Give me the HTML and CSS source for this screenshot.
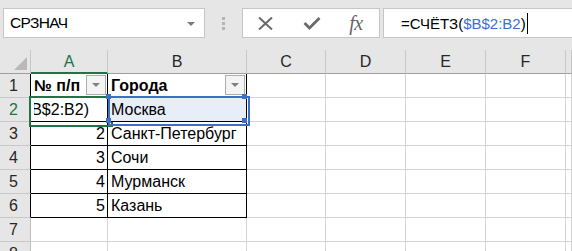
FILE: index.html
```html
<!DOCTYPE html>
<html lang="ru">
<head>
<meta charset="utf-8">
<title>Excel</title>
<link rel="stylesheet" href="styles.css">
</head>
<body>
<div class="toolbar">
  <div class="namebox"><span class="name">СРЗНАЧ</span><span class="nb-arrow"></span></div>
  <div class="grip"><i></i><i></i><i></i></div>
  <div class="fbtns">
    <span class="slot s1"><svg width="15" height="13" viewBox="0 0 15 13"><path d="M1 0.5 L14 12.5 M14 0.5 L1 12.5" stroke="#6a6a6a" stroke-width="2" fill="none"/></svg></span>
    <span class="slot s2"><svg width="18" height="13" viewBox="0 0 18 13"><path d="M1.5 6 L6.5 11 L16.5 1" stroke="#6a6a6a" stroke-width="2.8" fill="none"/></svg></span>
    <span class="slot s3"><span class="fx">fx</span></span>
  </div>
  <div class="formula"><span>=СЧЁТЗ(</span><span class="ref">$B$2:B2</span><span>)</span><span class="caret"></span></div>
</div>
<div class="sheet">
  <div class="row hdr">
    <div class="cell corner"><span class="tri"></span></div>
    <div class="cell ch active">A</div>
    <div class="cell ch">B</div>
    <div class="cell ch">C</div>
    <div class="cell ch">D</div>
    <div class="cell ch">E</div>
    <div class="cell ch">F</div>
    <div class="cell ch last"></div>
  </div>
  <div class="row">
    <div class="cell rh tb">1</div>
    <div class="cell t th"><span>№ п/п</span><span class="dd"></span></div>
    <div class="cell t th"><span>Города</span><span class="dd"></span></div>
    <div class="cell"></div><div class="cell"></div><div class="cell"></div><div class="cell"></div><div class="cell"></div>
  </div>
  <div class="row">
    <div class="cell rh tb active">2</div>
    <div class="cell t num sel"><span class="clip"><span class="edit">=СЧЁТЗ($B$2:B2)</span></span></div>
    <div class="cell t txt rng"><span>Москва</span></div>
    <div class="cell"></div><div class="cell"></div><div class="cell"></div><div class="cell"></div><div class="cell"></div>
  </div>
  <div class="row">
    <div class="cell rh tb">3</div>
    <div class="cell t num">2</div>
    <div class="cell t txt">Санкт-Петербург</div>
    <div class="cell"></div><div class="cell"></div><div class="cell"></div><div class="cell"></div><div class="cell"></div>
  </div>
  <div class="row">
    <div class="cell rh tb">4</div>
    <div class="cell t num">3</div>
    <div class="cell t txt">Сочи</div>
    <div class="cell"></div><div class="cell"></div><div class="cell"></div><div class="cell"></div><div class="cell"></div>
  </div>
  <div class="row">
    <div class="cell rh tb">5</div>
    <div class="cell t num">4</div>
    <div class="cell t txt">Мурманск</div>
    <div class="cell"></div><div class="cell"></div><div class="cell"></div><div class="cell"></div><div class="cell"></div>
  </div>
  <div class="row">
    <div class="cell rh tb">6</div>
    <div class="cell t num">5</div>
    <div class="cell t txt">Казань</div>
    <div class="cell"></div><div class="cell"></div><div class="cell"></div><div class="cell"></div><div class="cell"></div>
  </div>
  <div class="row">
    <div class="cell rh">7</div>
    <div class="cell"></div><div class="cell"></div><div class="cell"></div><div class="cell"></div><div class="cell"></div><div class="cell"></div><div class="cell"></div>
  </div>
  <div class="row">
    <div class="cell rh">8</div>
    <div class="cell"></div><div class="cell"></div><div class="cell"></div><div class="cell"></div><div class="cell"></div><div class="cell"></div><div class="cell"></div>
  </div>
</div>
</body>
</html>
```
FILE: styles.css
```css
* { box-sizing: border-box; }
html, body { margin: 0; padding: 0; }
body {
  width: 572px;
  height: 251px;
  overflow: hidden;
  background: #fff;
  font-family: "Liberation Sans", Arial, sans-serif;
  color: #000;
}

/* ---------- formula bar ---------- */
.toolbar {
  display: flex;
  align-items: flex-start;
  height: 50px;
  padding-top: 8px;
  background: #e6e6e6;
}
.namebox {
  margin-left: 3px;
  width: 202px;
  height: 30px;
  background: #fff;
  border: 1px solid #c6c6c6;
  display: flex;
  align-items: center;
  justify-content: space-between;
  padding: 0 9px 0 6px;
  font-size: 15.5px;
  letter-spacing: -0.6px;
}
.nb-arrow {
  width: 0;
  height: 0;
  border-left: 4px solid transparent;
  border-right: 4px solid transparent;
  border-top: 4px solid #7a7a7a;
  margin-top: 2px;
}
.grip {
  width: 37px;
  height: 30px;
  display: flex;
  flex-direction: column;
  align-items: center;
  justify-content: center;
  gap: 2px;
}
.grip i {
  display: block;
  width: 3px;
  height: 3px;
  background: #b4b4b4;
}
.fbtns {
  width: 138px;
  height: 30px;
  background: #fff;
  border: 1px solid #c6c6c6;
  display: flex;
  align-items: center;
}
.slot {
  display: flex;
  align-items: center;
  justify-content: center;
  height: 28px;
}
.s1 { width: 44px; }
.s2 { width: 50px; }
.s3 { width: 38px; }
.fx {
  font-family: "Liberation Serif", "Times New Roman", serif;
  font-style: italic;
  font-size: 20px;
  color: #666;
  letter-spacing: -0.5px;
}
.formula {
  flex: 1;
  margin-left: 3px;
  margin-right: -2px;
  height: 30px;
  background: #fff;
  border: 1px solid #c6c6c6;
  display: flex;
  align-items: center;
  padding-left: 17px;
  font-size: 15px;
  white-space: nowrap;
}
.ref { color: #3a6fd0; }
.caret {
  width: 1px;
  height: 21px;
  background: #000;
  margin-left: 1px;
}

/* ---------- sheet ---------- */
.sheet { font-size: 16px; }
.row {
  display: grid;
  grid-template-columns: 31px 77px 139px 79px 80px 80px 80px 1fr;
  height: 24px;
}
.cell {
  border-right: 1px solid #d4d4d4;
  border-bottom: 1px solid #d4d4d4;
  display: flex;
  align-items: center;
  white-space: nowrap;
  min-width: 0;
}
.hdr .cell {
  background: #e6e6e6;
  border-right-color: #c8c8c8;
  border-bottom-color: #9e9e9e;
  justify-content: center;
  color: #262626;
}
.hdr .cell.active {
  color: #217346;
  border-bottom: 2px solid #217346;
  padding-top: 1px;
}
.corner { position: relative; }
.tri {
  position: absolute;
  right: 3px;
  bottom: 3px;
  width: 0;
  height: 0;
  border-left: 13px solid transparent;
  border-bottom: 13px solid #b9b9b9;
}
.rh {
  background: #e6e6e6;
  border-right-color: #bdbdbd;
  border-bottom-color: #c8c8c8;
  justify-content: center;
  padding-right: 3px;
  color: #262626;
}
.rh.tb { border-right-color: #000; }
.rh.active { color: #217346; }

.t { border-right-color: #000; border-bottom-color: #000; }
.th {
  font-weight: bold;
  justify-content: space-between;
  padding: 0 0 0 3px;
}
.txt { padding-left: 3px; }
.num { justify-content: flex-end; padding-right: 2px; }

.dd {
  width: 20px;
  height: 20px;
  margin-top: -1px;
  margin-right: 1px;
  border: 1px solid #adadad;
  background: #f4f4f4;
  display: flex;
  align-items: center;
  justify-content: center;
}
.dd::after {
  content: "";
  width: 0;
  height: 0;
  border-left: 4px solid transparent;
  border-right: 4px solid transparent;
  border-top: 4px solid #808080;
}

/* selected cell being edited */
.sel { position: relative; padding-right: 0; }
.clip {
  display: flex;
  justify-content: flex-end;
  width: 100%;
  margin-left: 3px;
  overflow: hidden;
  padding-right: 18px;
}
.sel::after {
  content: "";
  position: absolute;
  left: -2px;
  top: -2px;
  width: 80px;
  height: 27px;
  border: 2px solid #217346;
}

/* referenced range */
.rng { position: relative; background: #e8eef8; }
.rng span { position: relative; }
.rng::before {
  content: "";
  position: absolute;
  left: 0;
  top: -2px;
  width: 138px;
  height: 26px;
  border: 2px solid #3e6fc4;
}
.rng::after {
  content: "";
  position: absolute;
  left: -2px;
  top: -4px;
  width: 5px;
  height: 5px;
  background: #3e6fc4;
  box-shadow: 136px 0 0 #3e6fc4, 0 24px 0 #3e6fc4, 136px 24px 0 #3e6fc4;
}
```
